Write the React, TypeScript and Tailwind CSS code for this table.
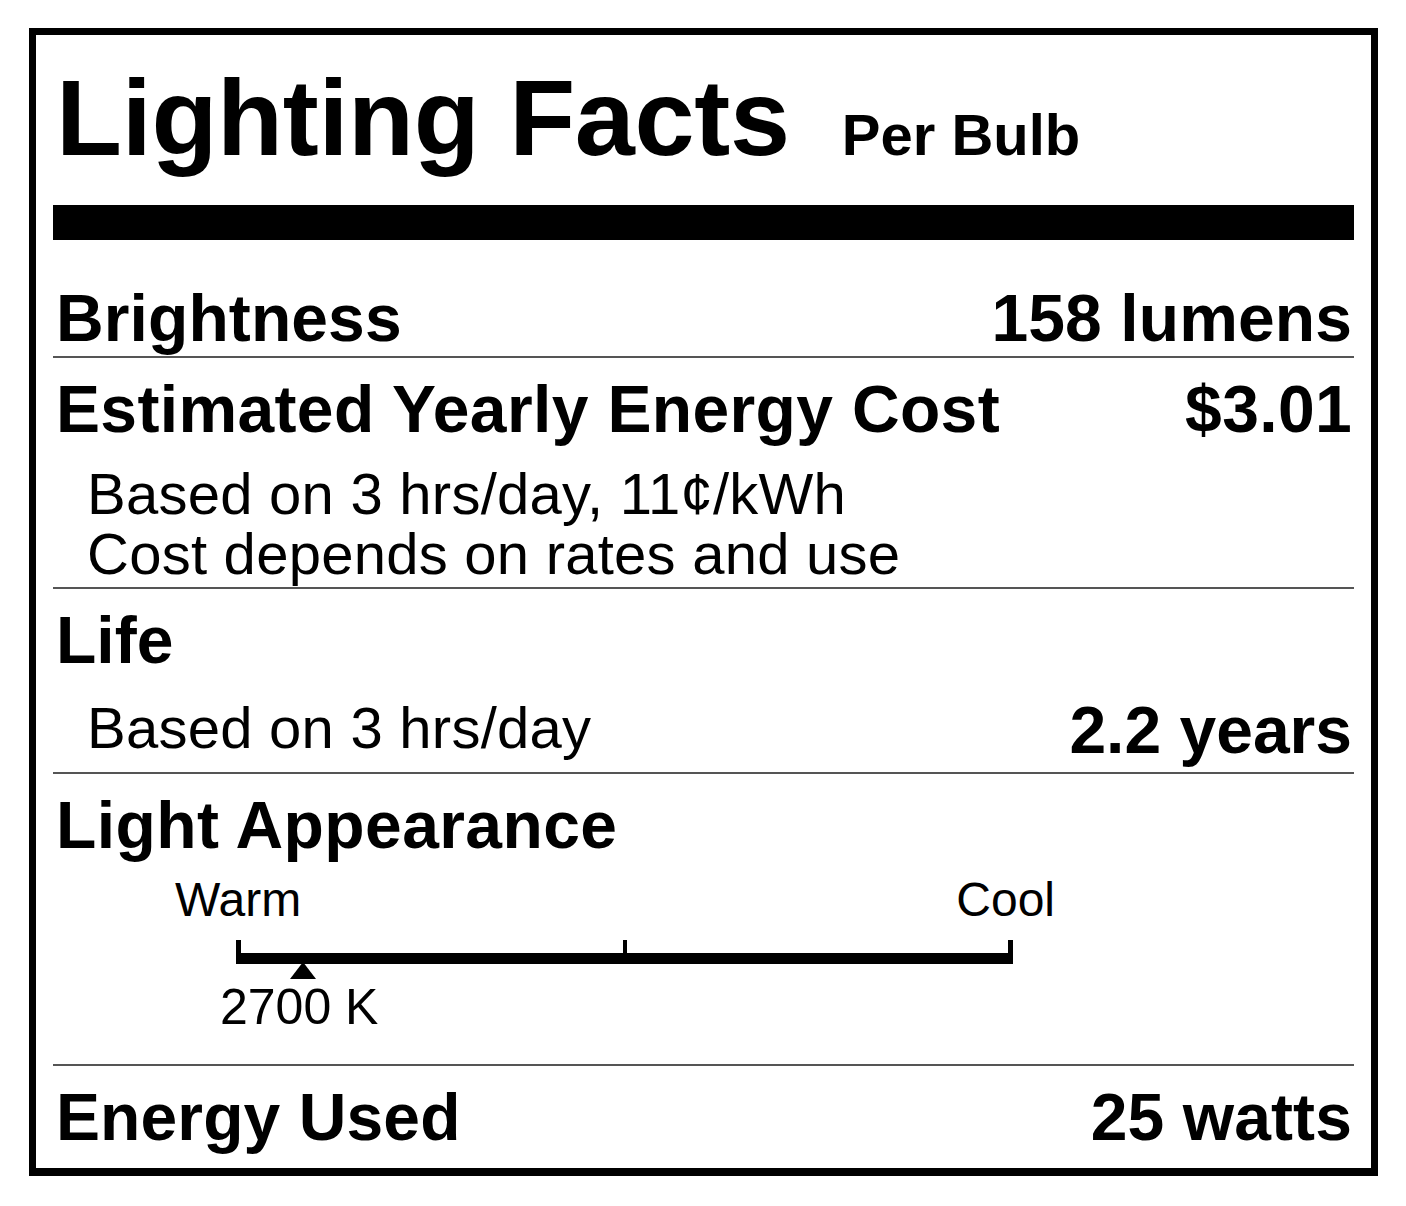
import React from 'react';

const Scale: React.FC = () => (
  <div className="ml-[122px] w-[882px]">
    <div className="flex justify-between text-[48px] leading-none">
      <span>Warm</span>
      <span className="mr-[2px]">Cool</span>
    </div>
    <svg
      className="ml-[61px] mt-[16px] block"
      width="777"
      height="40"
      viewBox="0 0 777 40"
    >
      <rect x="0" y="0" width="5" height="24" fill="#000" />
      <rect x="0" y="13" width="777" height="11" fill="#000" />
      <rect x="387" y="0" width="4" height="14" fill="#000" />
      <rect x="772" y="0" width="5" height="24" fill="#000" />
      <polygon points="67,22 54,39 80,39" fill="#000" />
    </svg>
    <div className="ml-[45px] mt-[2px] text-[50px] leading-none">2700 K</div>
  </div>
);

const App: React.FC = () => {
  return (
    <div className="w-[1406px] h-[1206px] bg-white pt-[28px] pl-[29px] text-black font-['Liberation_Sans',Arial,sans-serif]">
      <div className="w-[1349px] h-[1148px] border-[7px] border-b-[8px] border-black flex flex-col px-[17px]">
        {/* header */}
        <div className="pt-[29px] pl-[3px] flex items-baseline font-bold leading-none">
          <span className="text-[108px] tracking-[-0.3px]">Lighting Facts</span>
          <span className="ml-[52px] text-[58px]">Per Bulb</span>
        </div>
        <div className="mt-[33px] h-[35px] bg-black" />

        {/* brightness */}
        <div className="h-[118px] pt-[45px] pl-[3px] pr-[2px] border-b-2 border-[#555] flex justify-between items-baseline font-bold text-[66px] leading-none tracking-[0.1px]">
          <span>Brightness</span>
          <span>158 lumens</span>
        </div>

        {/* cost */}
        <div className="h-[231px] pt-[18px] pl-[3px] pr-[2px] border-b-2 border-[#555]">
          <div className="flex justify-between items-baseline font-bold text-[66px] leading-none tracking-[0.35px]">
            <span>Estimated Yearly Energy Cost</span>
            <span>$3.01</span>
          </div>
          <div className="mt-[22px] pl-[31px] text-[58px] leading-[60px] tracking-[0.25px]">
            <div>Based on 3 hrs/day, 11¢/kWh</div>
            <div>Cost depends on rates and use</div>
          </div>
        </div>

        {/* life */}
        <div className="h-[185px] pt-[18px] pl-[3px] pr-[2px] border-b-2 border-[#555]">
          <div className="font-bold text-[66px] leading-none">Life</div>
          <div className="mt-[25px] flex justify-between items-start">
            <span className="pl-[31px] text-[58px] leading-[60px] tracking-[0.25px]">Based on 3 hrs/day</span>
            <span className="-mt-[1px] font-bold text-[66px] leading-none">2.2 years</span>
          </div>
        </div>

        {/* light appearance */}
        <div className="h-[292px] pt-[18px] border-b-2 border-[#555]">
          <div className="pl-[3px] font-bold text-[66px] leading-none tracking-[0.4px]">Light Appearance</div>
          <div className="mt-[18px]">
            <Scale />
          </div>
        </div>

        {/* energy */}
        <div className="flex-1 pt-[18px] pl-[3px] pr-[2px] flex justify-between items-baseline font-bold text-[66px] leading-none tracking-[0.1px]">
          <span>Energy Used</span>
          <span>25 watts</span>
        </div>
      </div>
    </div>
  );
};

export default App;
